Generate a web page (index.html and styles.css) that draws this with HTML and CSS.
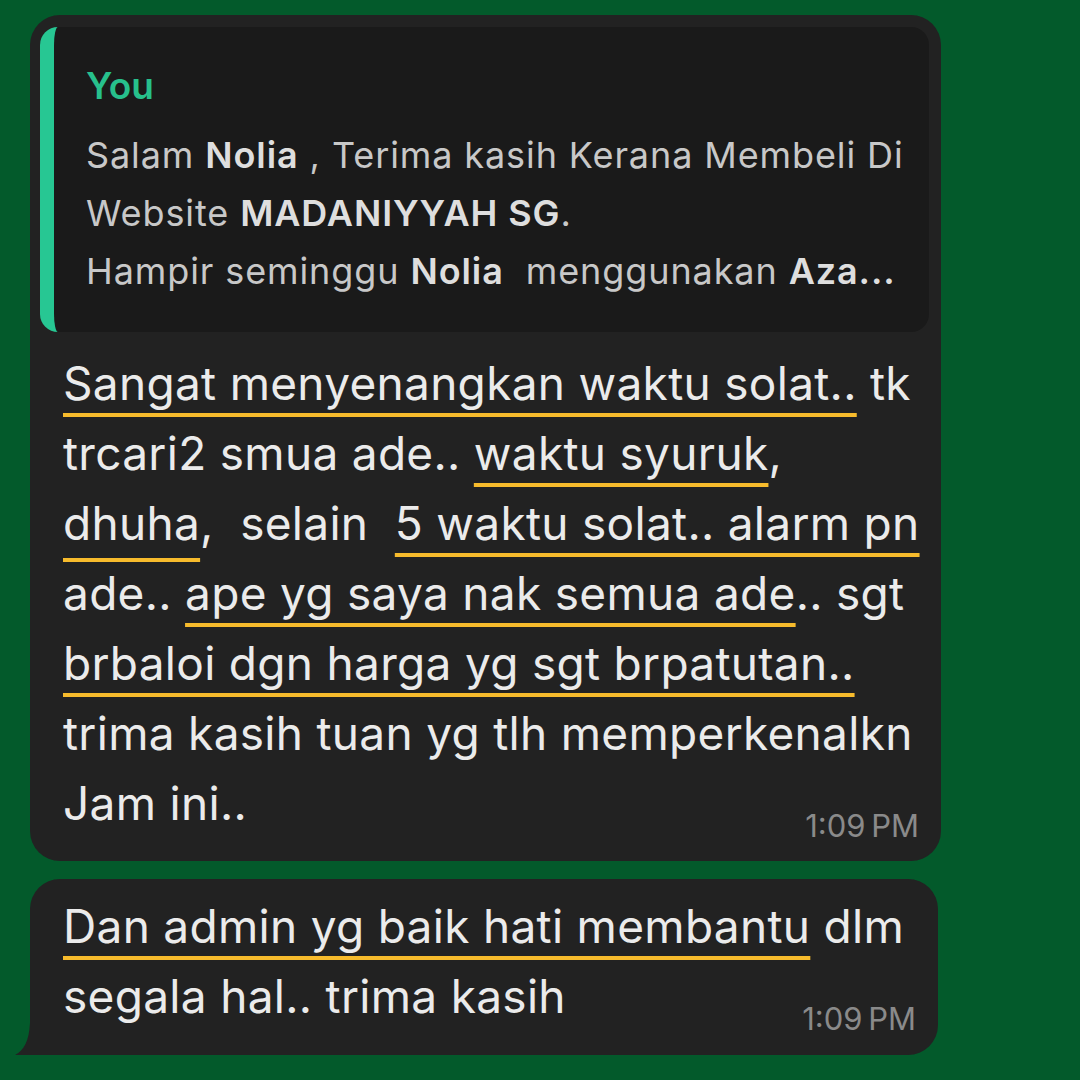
FILE: index.html
```html
<!DOCTYPE html>
<html>
<head>
<meta charset="utf-8">
<link rel="stylesheet" href="styles.css">
</head>
<body>
<div class="chat">
  <div class="bubble first">
    <div class="quote">
      <div class="quote-author">You</div>
      <div class="quote-text">Salam <b>Nolia</b> , Terima kasih Kerana Membeli Di<br>Website <b>MADANIYYAH SG</b>.<br>Hampir seminggu <b>Nolia</b>&nbsp; menggunakan <b>Aza...</b></div>
    </div>
    <div class="msg"><span class="hl">Sangat menyenangkan waktu solat..</span> tk<br>trcari2 smua ade.. <span class="hl">waktu syuruk</span>,<br><span class="hl low">dhuha</span>,&nbsp; selain&nbsp; <span class="hl">5 waktu solat.. alarm pn</span><br>ade.. <span class="hl">ape yg saya nak semua ade</span>.. sgt<br><span class="hl">brbaloi dgn harga yg sgt brpatutan..</span><br>trima kasih tuan yg tlh memperkenalkn<br>Jam ini..</div>
    <div class="time">1:09&thinsp;PM</div>
  </div>
  <div class="bubble second">
    <svg class="tail" width="22" height="32" viewBox="0 0 22 32"><path d="M22 0 L22 32 L0 32 C9 27 14 18 15 0 Z" fill="#222222"/></svg>
    <div class="msg"><span class="hl">Dan admin yg baik hati membantu</span> dlm<br>segala hal.. trima kasih</div>
    <div class="time">1:09&thinsp;PM</div>
  </div>
</div>
</body>
</html>
```
FILE: styles.css
```css
html, body {
  margin: 0;
  padding: 0;
}
body {
  width: 1080px;
  height: 1080px;
  background: #035a2b;
  font-family: Inter, "Noto Sans", sans-serif;
  overflow: hidden;
}
.chat {
  padding: 15px 0 0 30px;
  display: flex;
  flex-direction: column;
  gap: 18px;
}
.bubble {
  position: relative;
  background: #222222;
  border-radius: 30px;
  box-sizing: border-box;
}
.first {
  width: 911px;
  padding: 12px 12px 20px 10px;
}
.second {
  width: 908px;
  padding: 12px 22px 21px 33px;
  border-bottom-left-radius: 0;
}
.tail {
  position: absolute;
  left: -15px;
  bottom: 0;
  display: block;
}
.quote {
  background: #1a1a1a;
  border-radius: 18px;
  border-left: 14px solid #27c793;
  padding: 37px 20px 32px 32px;
}
.quote-author {
  color: #27c08c;
  font-size: 37px;
  font-weight: 600;
  line-height: 44px;
}
.quote-text {
  margin-top: 18px;
  color: #c8c8c8;
  font-size: 36px;
  letter-spacing: 0.9px;
  line-height: 58px;
  white-space: nowrap;
}
.quote-text b {
  font-weight: 600;
  color: #dedede;
}
.msg {
  color: #ebebeb;
  font-size: 46px;
  letter-spacing: 0.3px;
  line-height: 70px;
  white-space: nowrap;
}
.first .msg {
  margin-top: 16px;
  padding-left: 23px;
}
.hl {
  text-decoration: underline;
  text-decoration-color: #f7bb2c;
  text-decoration-thickness: 4px;
  text-underline-offset: 13px;
  text-decoration-skip-ink: none;
}
.hl.low {
  text-underline-offset: 18px;
}
.time {
  display: flex;
  justify-content: flex-end;
  margin-top: -27px;
  color: #8a8a8a;
  font-size: 31px;
  line-height: 30px;
}
.first .time {
  padding-right: 10px;
}
```
